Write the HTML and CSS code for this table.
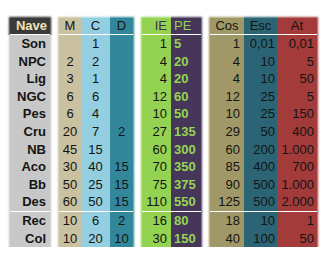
FILE: index.html
```html
<!DOCTYPE html>
<html>
<head>
<meta charset="utf-8">
<link rel="stylesheet" href="styles.css">
</head>
<body>
<div class="sheet">
  <div class="group">
    <div class="col name solo">
      <div class="hd">Nave</div>
      <div class="cell">Son</div><div class="cell">NPC</div><div class="cell">Lig</div><div class="cell">NGC</div><div class="cell">Pes</div>
      <div class="cell">Cru</div><div class="cell">NB</div><div class="cell">Aco</div><div class="cell">Bb</div><div class="cell">Des</div>
      <div class="cell sep">Rec</div><div class="cell">Col</div>
    </div>
  </div>
  <div class="group">
    <div class="col m first">
      <div class="hd">M</div>
      <div class="cell"></div><div class="cell">2</div><div class="cell">3</div><div class="cell">6</div><div class="cell">6</div>
      <div class="cell">20</div><div class="cell">45</div><div class="cell">30</div><div class="cell">50</div><div class="cell">60</div>
      <div class="cell sep">10</div><div class="cell">10</div>
    </div>
    <div class="col c mid">
      <div class="hd">C</div>
      <div class="cell">1</div><div class="cell">2</div><div class="cell">1</div><div class="cell">6</div><div class="cell">4</div>
      <div class="cell">7</div><div class="cell">15</div><div class="cell">40</div><div class="cell">25</div><div class="cell">50</div>
      <div class="cell sep">6</div><div class="cell">20</div>
    </div>
    <div class="col d last">
      <div class="hd">D</div>
      <div class="cell"></div><div class="cell"></div><div class="cell"></div><div class="cell"></div><div class="cell"></div>
      <div class="cell">2</div><div class="cell"></div><div class="cell">15</div><div class="cell">15</div><div class="cell">15</div>
      <div class="cell sep">2</div><div class="cell">10</div>
    </div>
  </div>
  <div class="group">
    <div class="col ie first">
      <div class="hd">IE</div>
      <div class="cell">1</div><div class="cell">4</div><div class="cell">4</div><div class="cell">12</div><div class="cell">10</div>
      <div class="cell">27</div><div class="cell">60</div><div class="cell">70</div><div class="cell">75</div><div class="cell">110</div>
      <div class="cell sep">16</div><div class="cell">30</div>
    </div>
    <div class="col pe last">
      <div class="hd">PE</div>
      <div class="cell">5</div><div class="cell">20</div><div class="cell">20</div><div class="cell">60</div><div class="cell">50</div>
      <div class="cell">135</div><div class="cell">300</div><div class="cell">350</div><div class="cell">375</div><div class="cell">550</div>
      <div class="cell sep">80</div><div class="cell">150</div>
    </div>
  </div>
  <div class="group">
    <div class="col cos first">
      <div class="hd">Cos</div>
      <div class="cell">1</div><div class="cell">4</div><div class="cell">4</div><div class="cell">12</div><div class="cell">10</div>
      <div class="cell">29</div><div class="cell">60</div><div class="cell">85</div><div class="cell">90</div><div class="cell">125</div>
      <div class="cell sep">18</div><div class="cell">40</div>
    </div>
    <div class="col esc mid">
      <div class="hd">Esc</div>
      <div class="cell">0,01</div><div class="cell">10</div><div class="cell">10</div><div class="cell">25</div><div class="cell">25</div>
      <div class="cell">50</div><div class="cell">200</div><div class="cell">400</div><div class="cell">500</div><div class="cell">500</div>
      <div class="cell sep">10</div><div class="cell">100</div>
    </div>
    <div class="col at last">
      <div class="hd">At</div>
      <div class="cell">0,01</div><div class="cell">5</div><div class="cell">50</div><div class="cell">5</div><div class="cell">150</div>
      <div class="cell">400</div><div class="cell">1.000</div><div class="cell">700</div><div class="cell">1.000</div><div class="cell">2.000</div>
      <div class="cell sep">1</div><div class="cell">50</div>
    </div>
  </div>
</div>
</body>
</html>
```

FILE: styles.css
```css
* { box-sizing: border-box; }
body {
  margin: 0;
  background: #ffffff;
}
.sheet {
  display: flex;
  gap: 9px;
  padding: 18px 0 0 10px;
  font-family: "Liberation Sans", Arial, sans-serif;
  font-size: 13px;
  color: #141414;
}
.group {
  display: flex;
}
.col {
  display: flex;
  flex-direction: column;
  background: var(--bg);
  box-shadow: 0 0 2px 1px var(--bg);
}
.first { clip-path: inset(-5px 0 -5px -5px); }
.mid { clip-path: inset(-5px 0 -5px 0); }
.last { clip-path: inset(-5px -5px -5px 0); }
.cell {
  height: 17.6px;
  line-height: 17.6px;
  white-space: nowrap;
}
.hd {
  height: 17px;
  line-height: 16px;
  border-bottom: 1px solid #ffffff;
  white-space: nowrap;
}
.cell.sep {
  height: 18.6px;
  border-top: 1px solid #ffffff;
}

.name { --bg: #c8c8c8; width: 40px; text-align: right; font-weight: bold; }
.name .cell { padding-right: 4px; }
.name .hd {
  background: #3a3a3a;
  color: #f2e4b4;
  padding-right: 3px;
  box-shadow: 0 0 2px 1px #3a3a3a;
  clip-path: inset(-5px -5px 0 -5px);
}

.m { --bg: #c9c1a0; width: 22px; text-align: center; }
.c { --bg: #93cfe0; width: 29px; text-align: center; }
.d { --bg: #33879a; width: 23px; text-align: center; }

.ie { --bg: #94d252; width: 29px; text-align: right; }
.ie .cell, .ie .hd { padding-right: 4px; }
.ie .hd { color: #3d3450; }
.pe { --bg: #45365a; width: 30px; text-align: left; color: #96d452; }
.pe .cell { font-weight: bold; padding-left: 3px; }
.pe .hd { padding-left: 3px; }

.cos { --bg: #a09866; width: 34px; text-align: right; }
.cos .cell { padding-right: 4px; }
.esc { --bg: #2b6475; width: 33px; text-align: right; }
.esc .cell { padding-right: 2px; }
.at { --bg: #a23b3a; width: 40px; text-align: right; }
.at .cell { padding-right: 3px; }
.cos .hd, .esc .hd, .at .hd { text-align: center; }
```
